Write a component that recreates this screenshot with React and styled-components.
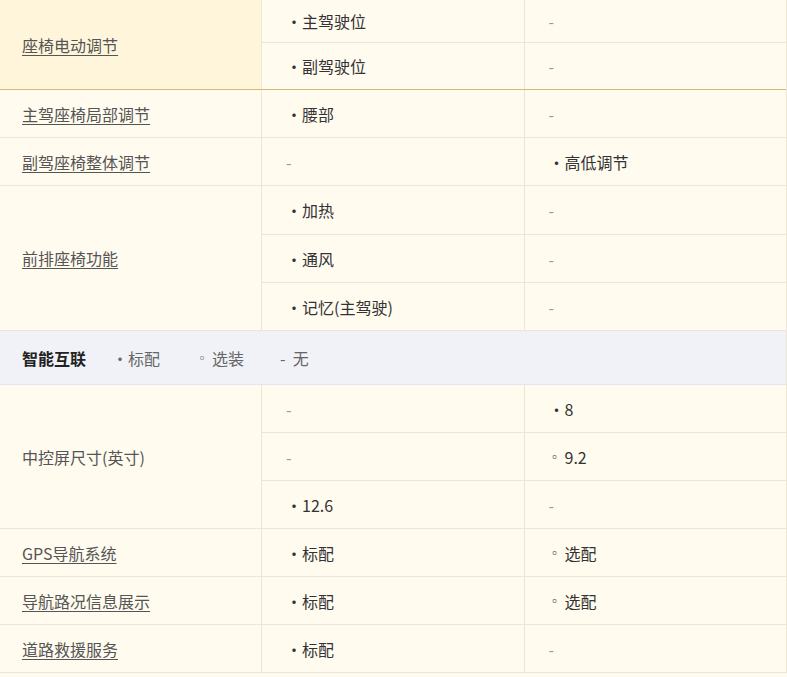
import React from 'react';
import styled, { createGlobalStyle } from 'styled-components';

const Global = createGlobalStyle`
  html, body { margin: 0; padding: 0; background: #fffbef; }
  body { font-family: "Noto Sans CJK SC", "Noto Sans", sans-serif; font-size: 16px; color: #333; }
`;

const Table = styled.div`
  width: 787px;
  border-right: 1px solid #ece6d6;
  box-sizing: border-box;
`;

const Group = styled.div`
  display: flex;
  border-bottom: 1px solid ${(p) => (p.$active ? '#d7b772' : '#ece6d6')};
`;

const Label = styled.div`
  width: 262px;
  flex-shrink: 0;
  box-sizing: border-box;
  padding-left: 22px;
  display: flex;
  align-items: center;
  border-right: 1px solid #ece6d6;
  background: ${(p) => (p.$active ? '#fff5db' : 'transparent')};
  color: #555;
  text-decoration: ${(p) => (p.$link ? 'underline' : 'none')};
  text-underline-offset: 3px;
`;

const SubList = styled.div`
  flex: 1;
  display: flex;
  flex-direction: column;
`;

const SubRow = styled.div`
  display: flex;
  height: ${(p) => p.$h}px;
  & + & { border-top: 1px solid #ece6d6; }
`;

const Cell = styled.div`
  flex: 1;
  box-sizing: border-box;
  padding-left: 24px;
  display: flex;
  align-items: center;
  color: ${(p) => (p.$dash ? '#999' : '#333')};
  & + & { border-left: 1px solid #ece6d6; }
`;

const Mark = styled.span`
  display: inline-block;
  width: 14px;
  margin-right: 2px;
  font-size: ${(p) => (p.$hollow ? '12px' : '16px')};
`;

const Header = styled.div`
  display: flex;
  align-items: center;
  height: 53px;
  padding-left: 22px;
  background: #f1f2f7;
  border-bottom: 1px solid #e4e4ea;
  gap: 26px;
`;

const HeaderTitle = styled.span`
  font-weight: 700;
  color: #222;
`;

const Legend = styled.span`
  display: inline-flex;
  align-items: center;
  color: #666;
  margin-left: ${(p) => p.$ml || 0}px;
`;

function Value({ v }) {
  if (v === '-') return <Cell $dash>-</Cell>;
  const hollow = v.startsWith('o');
  return (
    <Cell>
      <Mark $hollow={hollow}>{hollow ? '◦' : '•'}</Mark>
      {v.slice(1)}
    </Cell>
  );
}

function Row({ label, link = true, active, rows, heights }) {
  return (
    <Group $active={active}>
      <Label $link={link} $active={active}>{label}</Label>
      <SubList>
        {rows.map((r, i) => (
          <SubRow key={i} $h={heights ? heights[i] : 47}>
            <Value v={r[0]} />
            <Value v={r[1]} />
          </SubRow>
        ))}
      </SubList>
    </Group>
  );
}

export default function App() {
  return (
    <>
      <Global />
      <Table>
        <Row label="座椅电动调节" active rows={[['*主驾驶位', '-'], ['*副驾驶位', '-']]} heights={[42, 46]} />
        <Row label="主驾座椅局部调节" rows={[['*腰部', '-']]} />
        <Row label="副驾座椅整体调节" rows={[['-', '*高低调节']]} />
        <Row label="前排座椅功能" rows={[['*加热', '-'], ['*通风', '-'], ['*记忆(主驾驶)', '-']]} heights={[48, 47, 47]} />
        <Header>
          <HeaderTitle>智能互联</HeaderTitle>
          <Legend><Mark>•</Mark>标配</Legend>
          <Legend $ml={10}><Mark $hollow>◦</Mark>选装</Legend>
          <Legend $ml={10}>-&nbsp;&nbsp;无</Legend>
        </Header>
        <Row label="中控屏尺寸(英寸)" link={false} rows={[['-', '*8'], ['-', 'o9.2'], ['*12.6', '-']]} />
        <Row label="GPS导航系统" rows={[['*标配', 'o选配']]} />
        <Row label="导航路况信息展示" rows={[['*标配', 'o选配']]} />
        <Row label="道路救援服务" rows={[['*标配', '-']]} />
      </Table>
    </>
  );
}
